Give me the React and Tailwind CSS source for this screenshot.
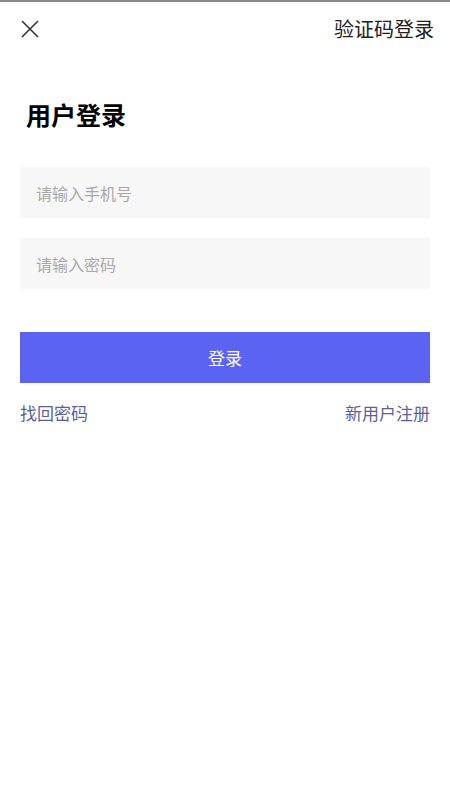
const App = () => {
    return (
        <div
            className="w-[450px] h-[800px] bg-white border-t-2 border-[#8a8a8a]"
            style={{ fontFamily: '"Noto Sans CJK SC", "Noto Sans", sans-serif' }}
        >
            {/* Top bar */}
            <div className="flex justify-between items-center h-[54px] pl-[20px] pr-[16px]">
                <svg width="20" height="20" viewBox="0 0 20 20" className="text-[#333]">
                    <path d="M2 2 L18 18 M18 2 L2 18" stroke="currentColor" strokeWidth="1.6" fill="none" />
                </svg>
                <span className="text-[20px] text-[#222]">验证码登录</span>
            </div>

            {/* Title */}
            <h1 className="mt-[40px] pl-[26px] text-[25px] font-bold leading-[36px] text-black">
                用户登录
            </h1>

            {/* Form */}
            <div className="mt-[35px] px-[20px] flex flex-col">
                <input
                    type="text"
                    placeholder="请输入手机号"
                    className="h-[51px] bg-[#f7f7f7] px-[16px] text-[16px] placeholder-[#a9a9a9] outline-none"
                />
                <input
                    type="password"
                    placeholder="请输入密码"
                    className="mt-[20px] h-[51px] bg-[#f7f7f7] px-[16px] text-[16px] placeholder-[#a9a9a9] outline-none"
                />
                <button className="mt-[43px] h-[51px] bg-[#5b63f2] text-white text-[17px]">
                    登录
                </button>
                <div className="mt-[17px] flex justify-between text-[17px] text-[#5b5f9d]">
                    <span>找回密码</span>
                    <span>新用户注册</span>
                </div>
            </div>
        </div>
    );
};

export default App;
